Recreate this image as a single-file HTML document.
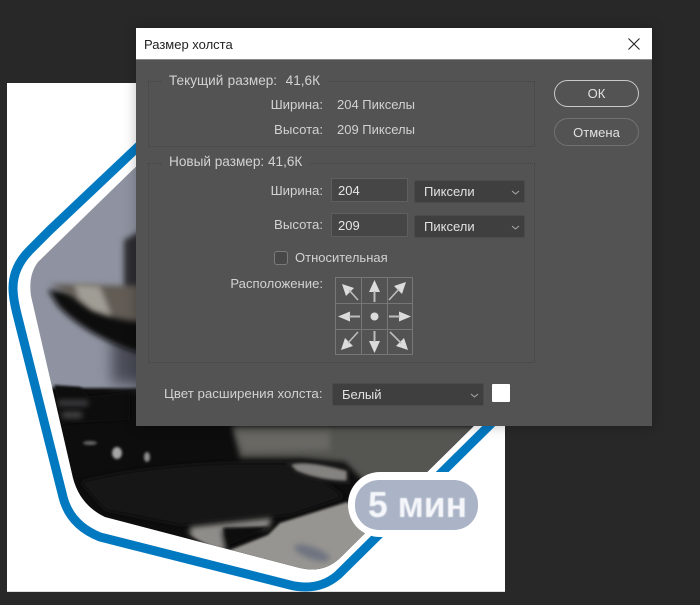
<!DOCTYPE html>
<html lang="ru"><head><meta charset="utf-8"><title>Размер холста</title>
<style>
html,body{margin:0;padding:0}
body{width:700px;height:605px;position:relative;overflow:hidden;background:#282828;font-family:"Liberation Sans","Noto Sans CJK SC",sans-serif;font-size:13px;color:#d2d2d2}
svg.art{position:absolute;left:0;top:0}
#dlg{position:absolute;left:136px;top:28px;width:516px;height:398px;background:#535353;box-shadow:0 0 12px rgba(0,0,0,.25)}
.bar{position:absolute;left:136px;top:28px;width:516px;height:32px;background:#fff;border-bottom:1px solid #8a8a8a;box-sizing:border-box}
.t{position:absolute;white-space:nowrap;line-height:16px;height:16px}
.r{text-align:right}
.box{position:absolute;border:1px dotted #444;box-sizing:border-box}
.inp{position:absolute;box-sizing:border-box;background:#464646;border:1px solid #5f5f5f;color:#e6e6e6;line-height:24px;padding-left:6px}
.sel{position:absolute;box-sizing:border-box;background:#3f3f3f;border:1px solid #4b4b4b;border-radius:2px;color:#e2e2e2;line-height:21px;padding-left:9px}
.sel svg{position:absolute;right:4px;top:9px}
.btn{position:absolute;box-sizing:border-box;border-radius:14px;text-align:center;color:#e0e0e0;left:554px;width:85px}
.cb{position:absolute;left:274px;top:251px;width:14px;height:14px;box-sizing:border-box;background:#484848;border:1px solid #7a7a7a;border-radius:3px}
</style></head><body>
<svg class="art" width="700" height="605" viewBox="0 0 700 605">
<defs>
<clipPath id="ph"><path d="M150,153 L38,262 Q28,275 31,296 L73,478 Q80,505 105,517 L300,568 Q325,574 342,556 L490,410 L490,150 Z"/></clipPath>
<filter id="b0" x="-10%" y="-10%" width="120%" height="120%"><feGaussianBlur stdDeviation=".4"/></filter>
<filter id="b1" x="-40%" y="-40%" width="180%" height="180%"><feGaussianBlur stdDeviation="1.2"/></filter>
<filter id="b2" x="-60%" y="-60%" width="220%" height="220%"><feGaussianBlur stdDeviation="3"/></filter>
<filter id="b4" x="-100%" y="-100%" width="300%" height="300%"><feGaussianBlur stdDeviation="7"/></filter>
</defs>
<rect x="7" y="83" width="498" height="509" fill="#fff"/>
<rect x="7" y="591" width="498" height="1" fill="#ddd"/>
<g clip-path="url(#ph)">
<rect x="20" y="150" width="480" height="440" fill="#8f93a1"/>
<path d="M20,388 L500,388 L500,600 L20,600 Z" fill="#0e0e0f" filter="url(#b1)"/>
<path d="M112,335 L150,335 L150,384 L112,384 Z" fill="#4a4b56" filter="url(#b4)"/>
<path d="M124,240 L150,226 L150,300 L124,290 Z" fill="#2e2d30" filter="url(#b2)"/>
<path d="M48,290 L150,296 L150,356 Q90,340 58,306 Z" fill="#0f0d0d" filter="url(#b2)"/>
<path d="M50,284 L150,286 L150,322 Q105,322 74,298 Z" fill="#625c54" filter="url(#b2)"/>
<path d="M74,284 L100,286 L112,316 L92,310 L78,298 Z" fill="#a09d95" filter="url(#b2)"/>
<path d="M54,385 L80,387 L90,396 L130,392 L130,420 L62,424 Z" fill="#0d0d0f" filter="url(#b1)"/>
<rect x="58" y="400" width="30" height="6" fill="#3f3f43" filter="url(#b2)"/>
<rect x="62" y="412" width="20" height="6" fill="#48484c" filter="url(#b2)"/>
<ellipse cx="90" cy="443" rx="7" ry="2" fill="#666" filter="url(#b1)"/>
<ellipse cx="117" cy="453" rx="5" ry="6" fill="#a5a5a5" filter="url(#b1)"/>
<ellipse cx="147" cy="457" rx="3" ry="5" fill="#8e8e8e" filter="url(#b1)"/>
<path d="M80,482 Q140,466 230,463 L300,463 L345,497 L290,515 L180,525 L105,510 Z" fill="#131314" filter="url(#b2)"/>
<path d="M232,426 L480,426 L480,500 L365,482 L345,462 L300,458 L240,458 Z" fill="#555451" filter="url(#b2)"/>
<path d="M236,432 L330,432 L330,450 L244,452 Z" fill="#696763" filter="url(#b2)"/>
<path d="M288,464 Q305,458 348,470 L348,482 Q320,482 296,472 Z" fill="#858380" stroke="#1a1a1a" stroke-width="4" filter="url(#b1)"/>
<path d="M280,523 L347,502 L385,525 L320,585 L225,552 L268,535 Z" fill="#979591" filter="url(#b1)"/>
<path d="M190,527 L272,518 L268,528 L222,530 L226,552 L200,548 L190,536 Z" fill="#8f8d89" filter="url(#b2)"/>
<path d="M223,528 L270,527 L230,545 Z" fill="#0c0c0d" filter="url(#b1)"/>
<path d="M187,535 L210,546 L205,548 L187,538 Z" fill="#111" filter="url(#b1)"/>
<ellipse cx="312" cy="553" rx="19" ry="6" fill="#6e7380" transform="rotate(20 312 553)" filter="url(#b2)"/>
</g>
<path d="M160,126 L50,230 L30,250 Q13,267 13,288 Q13,299 18,318 L63,497 Q70,525 100,537 L290,585 Q318,592 338,575 L510,405" fill="none" stroke="#0079c1" stroke-width="9"/>
<rect x="348" y="472" width="150" height="65" rx="32" fill="#fff"/>
<rect x="355" y="480" width="123" height="50" rx="24" fill="#abb4c6"/>
<text x="368" y="517" font-family="'Liberation Sans',sans-serif" font-weight="700" font-size="36" fill="#f4f6fa" textLength="99" lengthAdjust="spacingAndGlyphs" filter="url(#b0)">5 мин</text>
</svg>

<div id="dlg"></div>
<div class="bar"></div>
<div class="t" style="left:144px;top:37px;color:#222;font-size:13px">Размер холста</div>
<svg style="position:absolute;left:628px;top:38px" width="12" height="12"><path d="M.5,.5L11.5,11.5M11.5,.5L.5,11.5" stroke="#222" stroke-width="1.1" fill="none"/></svg>

<div class="box" style="left:148px;top:81px;width:387px;height:66px"></div>
<div class="t" style="left:162px;top:73px;background:#535353;padding:0 7px;font-size:13.6px;word-spacing:.5px">Текущий размер:&nbsp; 41,6К</div>
<div class="t r" style="left:223px;width:100px;top:97px;font-size:13.2px">Ширина:</div>
<div class="t" style="left:337px;top:97px">204 Пикселы</div>
<div class="t r" style="left:223px;width:100px;top:122px;font-size:13.2px">Высота:</div>
<div class="t" style="left:337px;top:122px">209 Пикселы</div>

<div class="box" style="left:148px;top:163px;width:387px;height:200px"></div>
<div class="t" style="left:162px;top:154px;background:#535353;padding:0 7px;font-size:13.6px">Новый размер: 41,6К</div>
<div class="t r" style="left:223px;width:100px;top:183px;font-size:13.2px">Ширина:</div>
<div class="inp" style="left:331px;top:178px;width:77px;height:24px">204</div>
<div class="sel" style="left:414px;top:180px;width:111px;height:23px">Пиксели<svg width="9" height="5"><path d="M1,1L4.5,4L8,1" stroke="#aaa" fill="none"/></svg></div>
<div class="t r" style="left:223px;width:100px;top:217px;font-size:13.2px">Высота:</div>
<div class="inp" style="left:331px;top:213px;width:77px;height:24px">209</div>
<div class="sel" style="left:414px;top:215px;width:111px;height:23px">Пиксели<svg width="9" height="5"><path d="M1,1L4.5,4L8,1" stroke="#aaa" fill="none"/></svg></div>

<div class="cb"></div>
<div class="t" style="left:295px;top:250px">Относительная</div>
<div class="t r" style="left:203px;width:120px;top:276px;font-size:13.1px">Расположение:</div>

<svg style="position:absolute;left:335px;top:277px" width="79" height="79" viewBox="0 0 79 79">
<g stroke="#777" fill="none"><rect x=".5" y=".5" width="77" height="77"/><path d="M26.5,0V78M52.5,0V78M0,26.5H78M0,52.5H78"/></g>
<g fill="#dcdcdc" stroke="none">
<path d="M7,7L19,11L11,19Z"/><path d="M14,13L23,23" stroke="#bdbdbd" stroke-width="1.6"/>
<path d="M39.5,3L45,15H34Z"/><path d="M39.5,14V25" stroke="#bdbdbd" stroke-width="2"/>
<path d="M71,5L67,17L59,9Z"/><path d="M64,12L54,23" stroke="#bdbdbd" stroke-width="1.6"/>
<path d="M3,39.5L15,34.5V44.5Z"/><path d="M14,39.5H25" stroke="#bdbdbd" stroke-width="2"/>
<circle cx="39.5" cy="39.5" r="4"/>
<path d="M76,39.5L64,34.5V44.5Z"/><path d="M54,39.5H65" stroke="#bdbdbd" stroke-width="2"/>
<path d="M6,73L10,61L18,69Z"/><path d="M13,66L23,55" stroke="#bdbdbd" stroke-width="1.6"/>
<path d="M39.5,76L34,64H45Z"/><path d="M39.5,54V65" stroke="#bdbdbd" stroke-width="2"/>
<path d="M73,73L61,69L69,61Z"/><path d="M66,66L55,55" stroke="#bdbdbd" stroke-width="1.6"/>
</g></svg>

<div class="t" style="left:164px;top:386px;font-size:13.3px">Цвет расширения холста:</div>
<div class="sel" style="left:332px;top:383px;width:152px;height:23px">Белый<svg width="9" height="5"><path d="M1,1L4.5,4L8,1" stroke="#aaa" fill="none"/></svg></div>
<div style="position:absolute;left:492px;top:384px;width:18px;height:18px;background:#fff;border-radius:1px"></div>

<div class="btn" style="top:80px;height:27px;border:1.5px solid #c9c9c9;line-height:25px;font-size:13px">ОК</div>
<div class="btn" style="top:118px;height:28px;border:1px solid #727272;line-height:27px;font-size:13px">Отмена</div>
</body></html>
